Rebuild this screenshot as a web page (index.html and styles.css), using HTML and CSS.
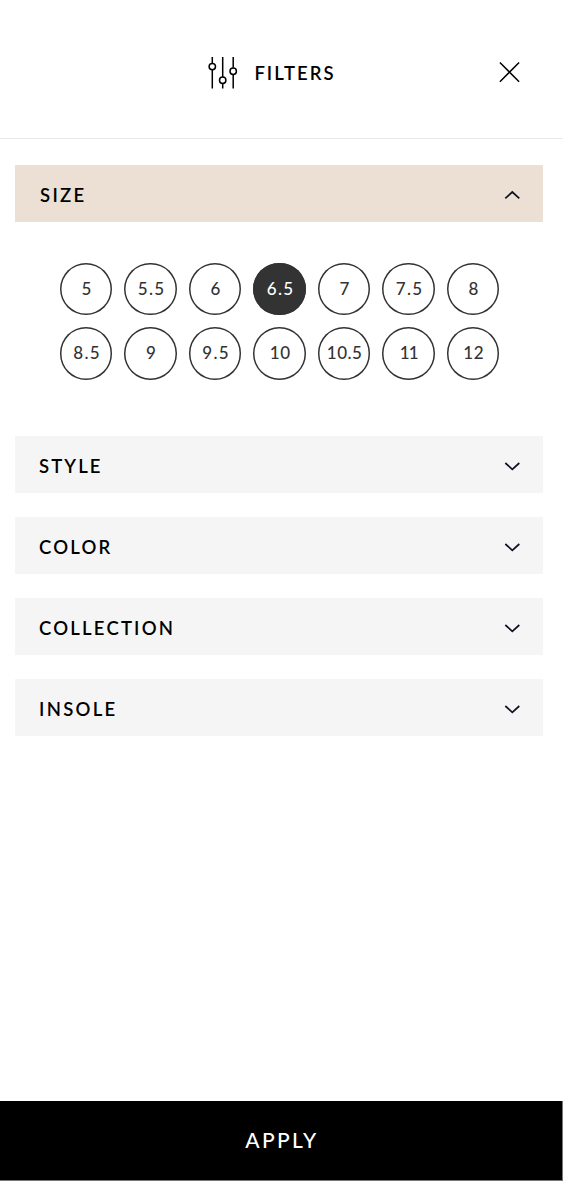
FILE: index.html
```html
<!DOCTYPE html>
<html lang="en">
<head>
<meta charset="utf-8">
<title>Filters</title>
<link rel="stylesheet" href="styles.css">
</head>
<body>
<div class="panel">
  <header class="header">
    <div class="heading">
      <svg class="sliders" width="30" height="34" viewBox="0 0 30 34" fill="none" stroke="#000" stroke-width="1.5">
        <path d="M4.3 1v6M4.3 13.2v19.4M14.7 1v20M14.7 27.6v5M25.2 1v10.7M25.2 18.1v14.5"/>
        <circle cx="4.3" cy="10.6" r="3.2"/><circle cx="14.7" cy="24.2" r="3.2"/><circle cx="25.2" cy="15.2" r="3.2"/>
      </svg>
      <h1 class="title">FILTERS</h1>
    </div>
    <button class="close" aria-label="Close">
      <svg width="22" height="22" viewBox="0 0 22 22" fill="none" stroke="#000" stroke-width="1.5"><path d="M.9 1.5l19.2 19.2M20.1 1.5L.9 20.7"/></svg>
    </button>
  </header>
  <main class="filters">
    <section class="filter open">
      <button class="bar"><span class="label size">SIZE</span>
        <svg class="chevron" width="16" height="10" viewBox="0 0 16 10"><path d="M1.3 8.3L8.3 2l7 6.3"/></svg></button>
      <div class="sizes">
        <button class="option">5</button><button class="option">5.5</button><button class="option">6</button><button class="option selected">6.5</button><button class="option">7</button><button class="option">7.5</button><button class="option">8</button>
        <button class="option">8.5</button><button class="option">9</button><button class="option">9.5</button><button class="option tight">10</button><button class="option tight">10.5</button><button class="option narrow">11</button><button class="option tight">12</button>
      </div>
    </section>
    <section class="filter"><button class="bar"><span class="label">STYLE</span>
      <svg class="chevron" width="16" height="10" viewBox="0 0 16 10"><path d="M1.3 2l7 6.3 7-6.3"/></svg></button></section>
    <section class="filter"><button class="bar"><span class="label color">COLOR</span>
      <svg class="chevron" width="16" height="10" viewBox="0 0 16 10"><path d="M1.3 2l7 6.3 7-6.3"/></svg></button></section>
    <section class="filter"><button class="bar"><span class="label color">COLLECTION</span>
      <svg class="chevron" width="16" height="10" viewBox="0 0 16 10"><path d="M1.3 2l7 6.3 7-6.3"/></svg></button></section>
    <section class="filter"><button class="bar"><span class="label insole">INSOLE</span>
      <svg class="chevron" width="16" height="10" viewBox="0 0 16 10"><path d="M1.3 2l7 6.3 7-6.3"/></svg></button></section>
  </main>
  <button class="apply"><span>APPLY</span></button>
</div>
</body>
</html>
```
FILE: styles.css
```css
* { box-sizing: border-box; }
body { margin: 0; background: #fff; color: #000; font-family: Lato, "Open Sans", sans-serif; }
button { margin: 0; padding: 0; border: 0; border-radius: 0; background: none; color: inherit; font: inherit; }
svg { display: block; flex: none; }
.panel { width: 563px; height: 1181px; display: flex; flex-direction: column; overflow: hidden; }
.header { height: 139px; flex: none; display: flex; align-items: flex-start; justify-content: space-between; padding: 56px 42px 0 208px; border-bottom: 1px solid #e8e8e8; }
.heading { display: flex; }
.title { margin: 5px 0 0 16.4px; font-size: 18.5px; line-height: 24px; font-weight: 600; letter-spacing: 2px; }
.close { margin-top: 5px; }
.filters { flex: 1; display: flex; flex-direction: column; gap: 24px; padding: 26px 20px 0 15px; }
.bar { width: 100%; height: 57px; display: flex; align-items: center; justify-content: space-between; padding: 3px 23px 0 24px; background: #f5f5f5; }
.open .bar { background: #ecdfd3; }
.label { font-size: 18.5px; line-height: 24px; font-weight: 600; letter-spacing: 2.1px; }
.size { padding-left: 1px; letter-spacing: 2.3px; }
.color { letter-spacing: 2.2px; }
.insole { letter-spacing: 2.3px; }
.chevron { fill: none; stroke: #101020; stroke-width: 1.7; }
.sizes { display: grid; grid-template-columns: repeat(7, 52.5px); gap: 12px; padding: 40.5px 0 32.7px 44.9px; }
.option { width: 52.5px; height: 52.5px; display: flex; align-items: center; justify-content: center; border-radius: 50%; box-shadow: inset 0 0 0 1.5px #333; color: #333; font-size: 17px; line-height: 20px; font-weight: 500; letter-spacing: 1.4px; padding-left: 2px; }
.tight { letter-spacing: .5px; padding-left: 1px; }
.narrow { letter-spacing: -1px; padding-left: 0; }
.selected { background: #333; color: #fff; }
.apply { width: 563px; height: 80px; flex: none; padding: 0 0 1px 2px; border: solid #777; border-width: 0 1px 1px 0; background: #000; color: #fff; font-size: 21px; line-height: 26px; font-weight: 500; letter-spacing: 2.3px; }
```
